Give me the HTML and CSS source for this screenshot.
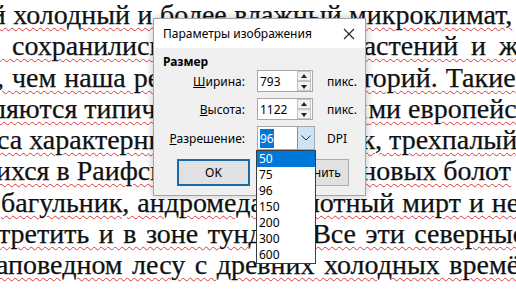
FILE: index.html
```html
<!DOCTYPE html>
<html lang="ru">

<head>
    <meta charset="UTF-8">
    <title>Параметры изображения</title>
    <link rel="stylesheet" href="styles.css">
</head>

<body>
    <div class="doc">
        <p class="ln l1">ый холодный и более влажный микроклимат,</p>
        <p class="ln l2">и сохранилис<span class="h">ь многие виды р</span>астений и животных</p>
        <p class="ln l3">, чем наша ре<span class="h">гион и ряд терри</span>торий. Такие</p>
        <p class="ln l4">ляются типич<span class="h">ными обитателя</span>ми европейских</p>
        <p class="ln l5">са характерн<span class="h">ы летяга, бурунду</span>к, трехпалый</p>
        <p class="ln l6">ихся в Раифс<span class="h">ком заповеднике сфаг</span>новых болот</p>
        <p class="ln l7">багульник, андромеда, болотный мирт и не</p>
        <p class="ln l8">третить и в зоне тундры. Все эти северные</p>
        <p class="ln l9">аповедном лесу с древних холодных времён</p>
    </div>

    <!-- окно поверх документа -->
    <div class="dialog">
        <div class="titlebar">
            <span>Параметры изображения</span>
            <svg class="close" width="12" height="12" viewBox="0 0 12 12">
                <path d="M1 1 L11 11 M11 1 L1 11" stroke="#222" stroke-width="1.1" fill="none" />
            </svg>
        </div>
        <div class="content">
            <div class="group">Размер</div>
            <div class="fields">
                <span class="lbl"><u>Ш</u>ирина:</span>
                <div class="spin">
                    <span class="val">793</span>
                    <div class="arrows"><i class="up"></i><i class="down"></i></div>
                </div>
                <span class="unit">пикс.</span>

                <span class="lbl"><u>В</u>ысота:</span>
                <div class="spin">
                    <span class="val">1122</span>
                    <div class="arrows"><i class="up"></i><i class="down"></i></div>
                </div>
                <span class="unit">пикс.</span>

                <span class="lbl"><u>Р</u>азрешение:</span>
                <div class="combo">
                    <span class="val"><span class="hl">96</span></span>
                    <div class="drop">
                        <svg width="10" height="6" viewBox="0 0 10 6">
                            <path d="M0.5 0.5 L5 5 L9.5 0.5" stroke="#333" stroke-width="1" fill="none" />
                        </svg>
                    </div>
                    <!-- раскрытый список -->
                    <ul class="list">
                        <li class="cur">50</li>
                        <li>75</li>
                        <li>96</li>
                        <li>150</li>
                        <li>200</li>
                        <li>300</li>
                        <li>600</li>
                    </ul>
                </div>
                <span class="unit">DPI</span>
            </div>
            <div class="buttons">
                <button class="btn ok">OK</button>
                <button class="btn">Отменить</button>
            </div>
        </div>
    </div>
</body>

</html>
```

FILE: styles.css
```css
html,
body,
p,
ul {
    margin: 0;
    padding: 0;
}

body {
    width: 516px;
    height: 290px;
    overflow: hidden;
    background: #fff;
    position: relative;
}

.doc {
    margin-top: -1px;
    font-family: "Liberation Serif", "Times New Roman", serif;
    font-size: 28px;
    line-height: 31.3px;
    color: #111;
    -webkit-text-stroke: 0.25px #111;
}

.ln {
    white-space: nowrap;
    text-decoration: underline wavy #d83a3a;
    text-decoration-thickness: 1px;
    text-underline-offset: 3px;
}

/* строки выровнены по ширине, поэтому у каждой свой отступ и пробелы */
.l1 { text-indent: -28px; word-spacing: 0.5px; }
.l2 { text-indent: -16px; word-spacing: 6px; }
.l2 .h { letter-spacing: 0.1px; }
.l3 { text-indent: -3px; word-spacing: 1px; }
.l3 .h { letter-spacing: -0.15px; }
.l4 { text-indent: -8px; }
.l4 .h { letter-spacing: 1.45px; }
.l5 { text-indent: -3px; }
.l6 { text-indent: -4px; }
.l6 .h { letter-spacing: -2.4px; }
.l7 { text-indent: 1px; word-spacing: 1px; }
.l8 { text-indent: -2px; word-spacing: 2.5px; }
.l9 { text-indent: -4px; word-spacing: 2.5px; }

/* окно */
.dialog {
    position: absolute;
    left: 153px;
    top: 18px;
    width: 211px;
    height: 176px;
    border: 1px solid #9fa6ad;
    background: #f0f0f0;
    box-shadow: 0 0 8px rgba(0, 0, 0, 0.25);
    font-family: "Noto Sans", "Open Sans", sans-serif;
    font-size: 12px;
    color: #000;
}

.titlebar {
    height: 29px;
    background: #fff;
    display: flex;
    align-items: center;
    justify-content: space-between;
    padding: 0 10px 0 9px;
}

.content {
    padding: 7px 0 0 9px;
}

.group {
    font-weight: bold;
    line-height: 14px;
}

.fields {
    margin-top: 1px;
    display: grid;
    grid-template-columns: 82px 58px auto;
    column-gap: 12px;
    row-gap: 6px;
    align-items: center;
}

.lbl {
    text-align: right;
}

.spin,
.combo {
    position: relative;
    display: flex;
    align-items: center;
    background: #fff;
    border: 1px solid #a8a8a8;
    box-sizing: border-box;
}

.spin {
    width: 56px;
    height: 22px;
}

.combo {
    width: 58px;
    height: 24px;
}

.val {
    flex: 1;
    padding-left: 2px;
}

.hl {
    background: #0078d7;
    color: #fff;
    padding: 1px 0;
}

.arrows {
    width: 15px;
    height: 20px;
    display: flex;
    flex-direction: column;
}

.arrows i {
    flex: 1;
    position: relative;
    background: #f2f2f2;
    border: 1px solid #c4c4c4;
    margin: 0 1px 0 0;
}

.arrows i::after {
    content: "";
    position: absolute;
    left: 3px;
    width: 0;
    height: 0;
    border-left: 3.5px solid transparent;
    border-right: 3.5px solid transparent;
}

.arrows .up::after {
    top: 2px;
    border-bottom: 4px solid #222;
}

.arrows .down::after {
    top: 3px;
    border-top: 4px solid #222;
}

.drop {
    width: 17px;
    height: 22px;
    display: flex;
    align-items: center;
    justify-content: center;
    background: #cce4f7;
    border-left: 1px solid #569de5;
    box-sizing: border-box;
}

.list {
    position: absolute;
    left: -2px;
    top: 23px;
    width: 58px;
    list-style: none;
    background: #fff;
    border: 1px solid #3c3c3c;
    z-index: 2;
}

.list li {
    height: 16px;
    line-height: 16px;
    padding-left: 2px;
}

.list .cur {
    background: #0078d7;
    color: #fff;
}

.buttons {
    margin-top: 9px;
    padding-left: 14px;
    display: flex;
    gap: 25px;
}

.btn {
    width: 74px;
    height: 27px;
    background: #e1e1e1;
    border: 1px solid #adadad;
    font-family: inherit;
    font-size: 12px;
    color: #000;
    padding: 0;
}

.ok {
    width: 73px;
    border: 2px solid #1b6aa8;
}
```
